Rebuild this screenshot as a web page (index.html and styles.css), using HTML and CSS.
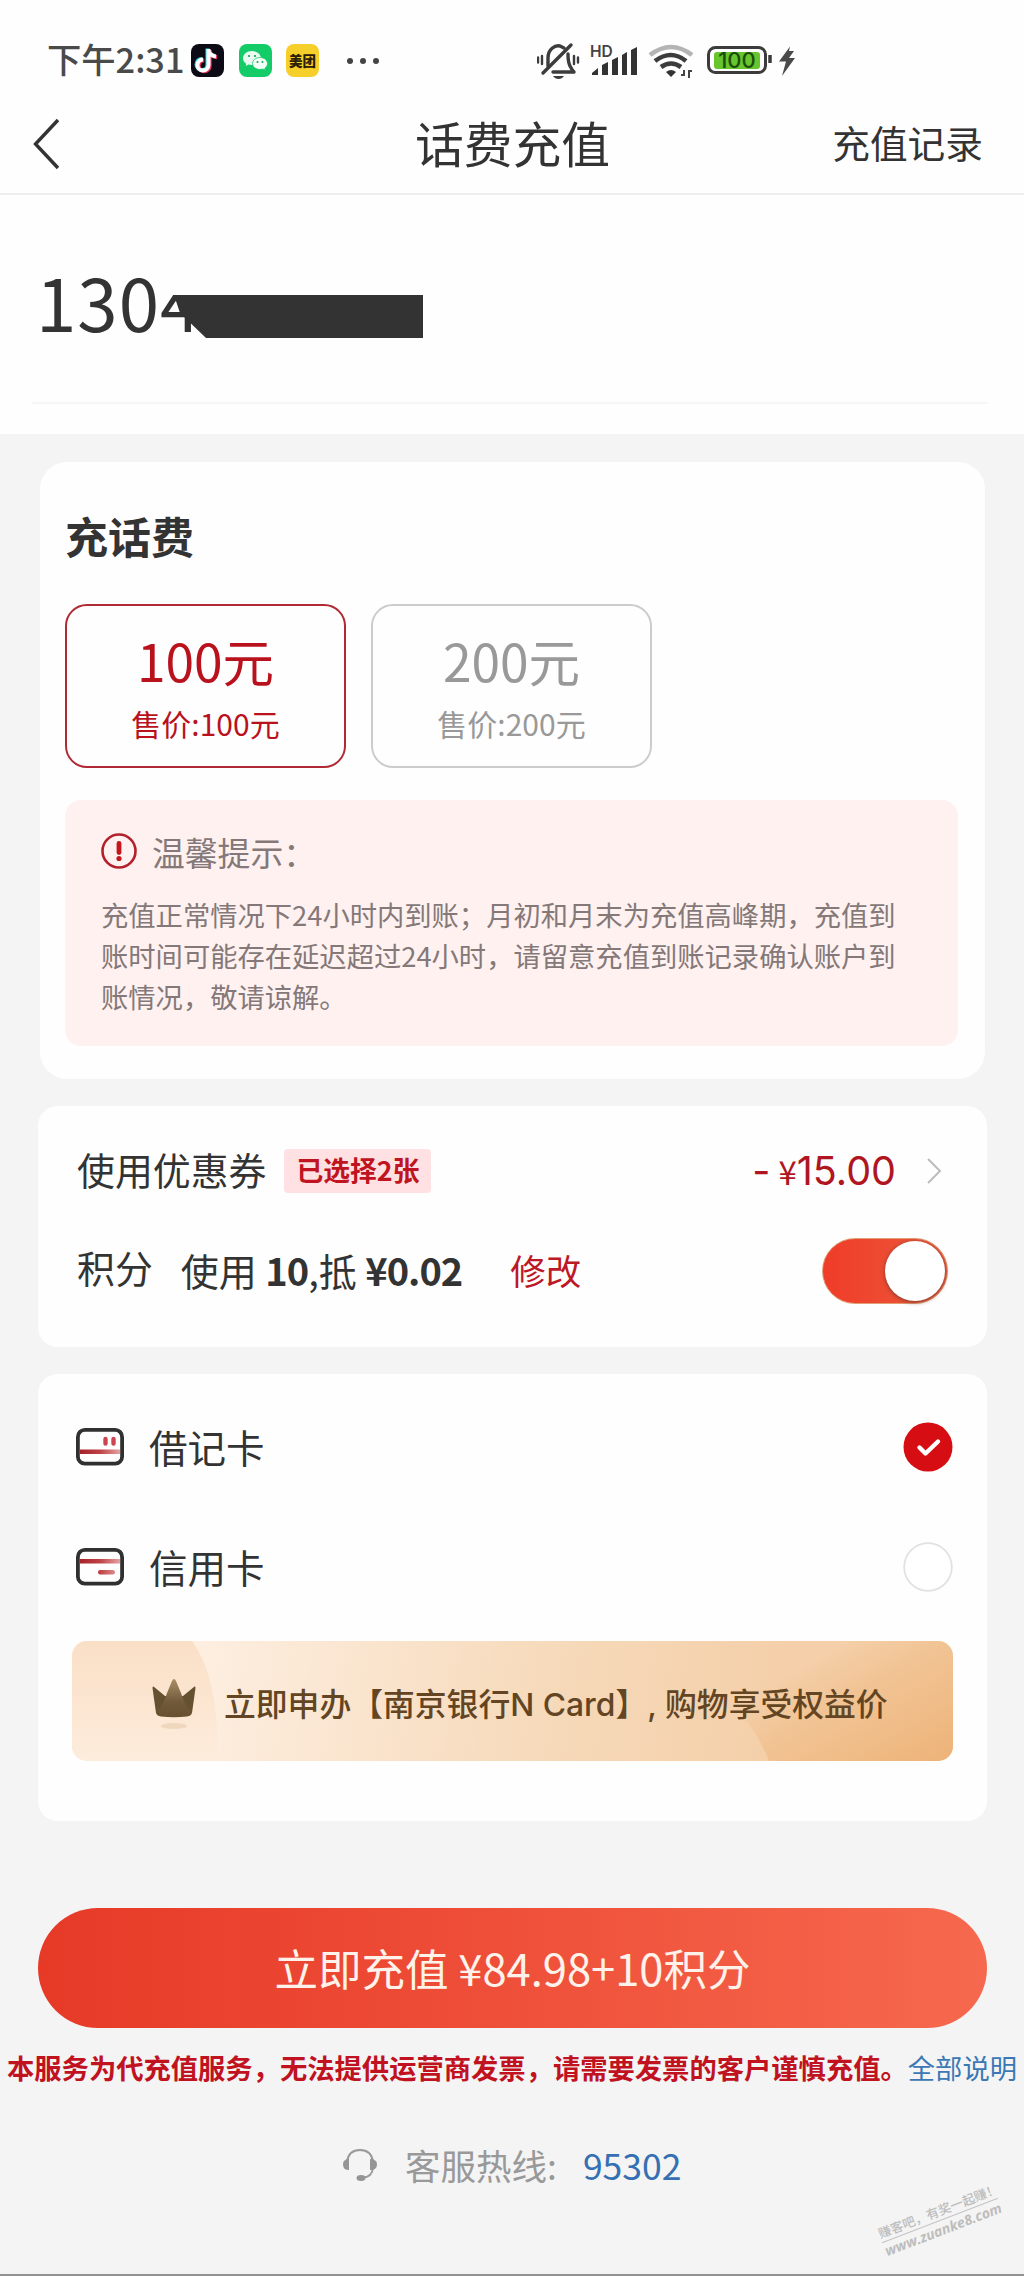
FILE: index.html
```html
<!DOCTYPE html>
<html lang="zh-CN">
<head>
<meta charset="utf-8">
<title>话费充值</title>
<link rel="stylesheet" href="styles.css">
</head>
<body>
<div class="screen">
  <header class="top">
    <div class="status">
      <span class="clock">下午2:31</span>
      <svg class="app" viewBox="0 0 33 33"><rect width="33" height="33" rx="8" fill="#0c0a14"/><g fill="none" stroke-width="4"><path d="M17.500 5v16a5.500 5.500 0 1 1-5.500-5.500M17.500 6c.7 4 3.500 6 7.500 6.500" stroke="#2fd8dd" transform="translate(-1 -.6)"/><path d="M17.500 5v16a5.500 5.500 0 1 1-5.500-5.500M17.500 6c.7 4 3.500 6 7.500 6.500" stroke="#e8325c" transform="translate(1.200 .8)"/><path d="M17.500 5v16a5.500 5.500 0 1 1-5.500-5.500M17.500 6c.7 4 3.500 6 7.500 6.500" stroke="#fff"/></g></svg>
      <svg class="app" viewBox="0 0 33 33"><rect width="33" height="33" rx="8" fill="#14cc67"/><path d="M13 7c-5 0-9 3.200-9 7.200 0 2.300 1.300 4.300 3.300 5.600L6.600 22l3-1.500c1 .3 2.200.5 3.400.5 5 0 9-3 9-6.800S18 7 13 7z" fill="#e9fbf1"/><path d="M21 13.500c-4.200 0-7.500 2.700-7.500 6s3.300 6 7.500 6c1 0 2-.2 2.900-.5l2.500 1.300-.6-2c1.700-1.100 2.700-2.900 2.700-4.800 0-3.300-3.300-6-7.500-6z" fill="#f4fff8" stroke="#14cc67" stroke-width=".8"/><g fill="#14a058"><circle cx="10" cy="12" r="1.100"/><circle cx="16" cy="12" r="1.100"/><circle cx="18.500" cy="18" r="1"/><circle cx="23.500" cy="18" r="1"/></g></svg>
      <span class="app meituan">美团</span>
      <svg class="dots" viewBox="0 0 34 8"><g fill="#444"><circle cx="4" cy="4" r="3"/><circle cx="17" cy="4" r="3"/><circle cx="30" cy="4" r="3"/></g></svg>
      <svg class="indicators" viewBox="0 0 262 38">
        <g fill="none" stroke="#3c3c3c" stroke-width="3.400" stroke-linecap="round" stroke-linejoin="round">
          <path d="M11 24V16C11 7 18 3 23 4L27 6"/><path d="M31 12Q31 20 33 24T37 30H16"/><path d="M6 31L34 3"/>
          <path d="M5 14v8M1 15.500v5M37 14v8M41 15.500v5" stroke-width="2.400"/>
        </g>
        <path d="M16 34h11q-2 3-5.500 3T16 34z" fill="#3c3c3c"/>
        <text x="53" y="15" class="hd">HD</text>
        <g fill="#333"><path d="M55 33v-2l6-5v7z"/><path d="M65 33V23l6-3v13z"/><path d="M75 33V18l6-3v18z"/><path d="M85 33V13l5-3v23z"/><path d="M94 33V8l6-3v28z"/></g>
        <g fill="none" stroke="#3c3c3c" stroke-width="4.600"><path d="M113 13Q134 -3 155 13" stroke="#b4b4b4"/><path d="M118 19Q134 7 149 19"/><path d="M124 25Q134 18 144 25"/></g>
        <path d="M129 30q5-4 10 0l-5 5z" fill="#333"/>
        <path d="M147 28v5h-3M147 34v-6M152 36v-7h3" fill="none" stroke="#444" stroke-width="2"/>
        <rect x="171.500" y="5.500" width="57" height="25" rx="7" fill="#fff" stroke="#3c3c3c" stroke-width="3"/>
        <rect x="177" y="10" width="46" height="17" rx="3" fill="#67c52e"/>
        <text x="200" y="26" class="charge">100</text>
        <path d="M233 13v8" stroke="#3c3c3c" stroke-width="3.500"/>
        <path d="M253 4.500L242 19.500h7L245 34l13-18h-6l5-7h-5z" fill="#4a4a4a"/>
      </svg>
    </div>
    <nav class="nav">
      <svg class="back" viewBox="0 0 30 54"><path d="M26 3L3.500 27 26 51" fill="none" stroke="#333" stroke-width="3.400"/></svg>
      <h1>话费充值</h1>
      <a class="record">充值记录</a>
    </nav>
  </header>

  <section class="phone">
    <div class="number">1304
      <svg class="redact" viewBox="0 0 270 70"><path d="M0 0h50v22H0z" fill="#fefefe"/><path d="M14 22h249v43H46L20 40z" fill="#333"/></svg>
    </div>
  </section>

  <main class="content">
    <section class="card recharge">
      <h2>充话费</h2>
      <div class="plans">
        <div class="plan active"><b>100元</b><span>售价:100元</span></div>
        <div class="plan"><b>200元</b><span>售价:200元</span></div>
      </div>
      <div class="tips">
        <div class="tips-title">
          <svg class="warn" viewBox="0 0 36 36"><circle cx="18" cy="18" r="16.500" fill="none" stroke="#b3202c" stroke-width="2.600"/><path d="M18 10.500v9" stroke="#c3161f" stroke-width="4.800" stroke-linecap="round"/><circle cx="18" cy="25.500" r="2.600" fill="#c3161f"/></svg>
          <span>温馨提示：</span>
        </div>
        <p>充值正常情况下24小时内到账；月初和月末为充值高峰期，充值到<br>账时间可能存在延迟超过24小时，请留意充值到账记录确认账户到<br>账情况，敬请谅解。</p>
      </div>
    </section>

    <section class="card discount">
      <div class="row">
        <span class="label">使用优惠券</span><span class="badge">已选择2张</span>
        <span class="amount">- <small>¥</small>15.00</span>
        <svg class="chev" viewBox="0 0 16 28"><path d="M2 2l12 12L2 26" fill="none" stroke="#bcbcbc" stroke-width="2"/></svg>
      </div>
      <div class="row">
        <span class="label">积分</span>
        <span class="points">使用 <b>10</b>,抵 <b>¥0.02</b></span>
        <a class="edit">修改</a>
        <span class="toggle"><i></i></span>
      </div>
    </section>

    <section class="card pay">
      <div class="method">
        <svg class="bank" viewBox="0 0 48 38"><defs><linearGradient id="red" gradientUnits="userSpaceOnUse" x1="4" x2="44"><stop offset="0" stop-color="#a8222a"/><stop offset=".5" stop-color="#bd4246"/><stop offset="1" stop-color="#e6a3a1"/></linearGradient></defs><rect x="4" y="21.500" width="40" height="4.500" fill="url(#red)"/><rect x="1.900" y="1.900" width="44.200" height="33.800" rx="7" fill="none" stroke="#303030" stroke-width="3.800"/><path d="M29.500 11v4.500M37.500 11v4.500" stroke="#cc4550" stroke-width="4.400" stroke-linecap="round"/></svg>
        <span>借记卡</span>
        <svg class="radio" viewBox="0 0 50 50"><circle cx="25" cy="25" r="24.500" fill="#d70d14"/><path d="M16.500 25.500l6 6L35 19.500" fill="none" stroke="#fff" stroke-width="4.400" stroke-linecap="round" stroke-linejoin="round"/></svg>
      </div>
      <div class="method">
        <svg class="bank" viewBox="0 0 48 38"><rect x="4" y="11" width="40" height="4.500" fill="url(#red)"/><rect x="1.900" y="1.900" width="44.200" height="33.800" rx="7" fill="none" stroke="#303030" stroke-width="3.800"/><rect x="22" y="22" width="17" height="4.500" rx="2.200" fill="url(#red)"/></svg>
        <span>信用卡</span>
        <svg class="radio" viewBox="0 0 50 50"><circle cx="25" cy="25" r="23.800" fill="#fff" stroke="#e2e2e2" stroke-width="1.800"/></svg>
      </div>
      <div class="banner">
        <svg class="swoosh" viewBox="0 0 881 120"><defs><linearGradient id="arcL" x2="0" y2="1"><stop offset="0" stop-color="#fadfc6"/><stop offset="1" stop-color="#fdecdc"/></linearGradient><linearGradient id="arcR" x2="1" y2="1"><stop offset=".25" stop-color="#efb981" stop-opacity="0"/><stop offset=".5" stop-color="#efb981" stop-opacity=".55"/><stop offset="1" stop-color="#edb277"/></linearGradient></defs><path d="M0 0h120q28 38 25 120H0z" fill="url(#arcL)"/><path d="M881 0H740L668 72q18 20 29 48h184z" fill="url(#arcR)"/></svg>
        <svg class="crown" viewBox="0 0 44 54"><defs><linearGradient id="cr" x2="0" y2="1"><stop offset="0" stop-color="#a98d66"/><stop offset=".6" stop-color="#715a3a"/><stop offset="1" stop-color="#66502f"/></linearGradient></defs><ellipse cx="22" cy="48" rx="13" ry="3" fill="#ead0b3" opacity=".7"/><path d="M1.500 8.500Q.5 8 .5 10L4 35H40L43.500 10Q43.500 8 42.500 8.500L31 18H13z" fill="#65502f"/><path d="M4 35Q12 26 15 15L20 3Q22-1 24 3l5 12q3 11 11 20-1 3-5 3.500-13 1.500-26 0-4-.5-5-3.500z" fill="url(#cr)"/></svg>
        <span>立即申办【南京银行<em>N Card</em>】<em>, </em>购物享受权益价</span>
      </div>
    </section>
  </main>

  <button class="submit">立即充值 ¥84.98+10积分</button>
  <p class="notice"><b>本服务为代充值服务，无法提供运营商发票，请需要发票的客户谨慎充值。</b><a>全部说明</a></p>
  <footer class="hotline">
    <svg class="headset" viewBox="0 0 36 34"><path d="M5 14C6 6 11 2 18 2s12 4 13 12v6q-1 9-10 9.500" fill="none" stroke="#999" stroke-width="2"/><path d="M7 11v11Q1 22 1 16.500T7 11zM28 11v11q7 0 7-5.500T28 11z" fill="#959595"/><ellipse cx="19" cy="30" rx="4.500" ry="3" fill="#959595"/></svg>
    <span>客服热线:</span><a>95302</a>
  </footer>
  <div class="watermark"><span>赚客吧，有奖一起赚！</span><span class="site">www.zuanke8.com</span></div>
</div>
</body>
</html>
```
FILE: styles.css
```css
* { box-sizing: border-box; }
body { margin: 0; background: #f4f4f4; color: #333; font-family: "Noto Sans CJK SC", sans-serif; }
h1, h2, p { margin: 0; font-weight: 400; }
em, i { font-style: normal; }
svg { display: block; flex: none; }
.screen { position: relative; width: 1024px; height: 2276px; overflow: hidden; background: #f4f4f4; border-bottom: 2px solid #929292; }

.top { height: 195px; background: #fefefe; border-bottom: 2px solid #eee; }
.status { display: flex; align-items: center; height: 94px; padding: 27px 0 0 47px; }
.clock { width: 144px; font-size: 34.300px; line-height: 40px; white-space: nowrap; font-weight: 500; color: #4a4a4a; margin-top: -5px; }
.app { width: 33px; height: 33px; margin-right: 14.500px; }
.meituan { border-radius: 8px; background: #f6cf2b; color: #2b2006; font-size: 13.500px; font-weight: 900; line-height: 32px; text-align: center; margin-right: 27px; }
.dots { width: 34px; height: 8px; margin-right: 157px; }
.indicators { width: 262px; height: 38px; }
.hd { font: 600 15.500px Inter, sans-serif; fill: #444; }
.charge { font: 500 22px Inter, sans-serif; fill: #1d4d0c; text-anchor: middle; }
.nav { display: grid; grid-template-columns: 1fr auto 1fr; align-items: center; height: 99px; padding: 0 41px 0 32px; }
.back { width: 30px; height: 54px; }
.nav h1 { font-size: 48.800px; line-height: 56px; margin: -3px -5px 0 5px; }
.record { justify-self: end; font-size: 37.700px; line-height: 50px; margin-top: -3px; }

.phone { height: 239px; padding: 0 36px 0 32px; background: #fefefe; }
.number { position: relative; height: 209px; padding: 61px 0 0 4px; border-bottom: 2px solid #f6f6f6; font-size: 72.700px; line-height: 90px; letter-spacing: 1px; }
.redact { position: absolute; left: 128px; top: 78px; width: 270px; height: 70px; }

.content { display: grid; gap: 27px; padding: 28px 37px 0 38px; }
.card { background: #fefefe; border-radius: 20px; }
.recharge { height: 617px; margin: 0 2px 0 2px; padding: 43px 27px 0 25px; border-radius: 27px; }
.recharge h2 { font-size: 43px; line-height: 60px; font-weight: 700; }
.plans { display: flex; gap: 25px; margin-top: 39px; }
.plan { display: flex; flex-direction: column; align-items: center; width: 281px; height: 164px; padding-top: 22px; border: 2px solid #ccc; border-radius: 22px; color: #999; }
.plan b { font-size: 51.500px; line-height: 64px; font-weight: 400; }
.plan span { font-size: 30px; line-height: 44px; margin-top: 9px; }
.plan.active { border-color: #b02a35; color: #b9121d; }
.tips { height: 246px; margin-top: 32px; padding: 30px 36px 0; background: #fef1f0; border-radius: 16px; color: #847878; }
.tips-title { display: flex; align-items: center; gap: 15px; height: 44px; font-size: 32.800px; line-height: 44px; }
.warn { width: 36px; height: 36px; margin-top: -3px; }
.tips p { margin-top: 20px; font-size: 27.300px; line-height: 40.800px; white-space: nowrap; }

.discount { height: 241px; padding: 15px 38px 0 39px; }
.row { display: flex; align-items: center; height: 100px; }
.label { font-size: 37.900px; line-height: 50px; margin-top: -5px; }
.row + .row .label { margin-top: -9px; }
.badge { height: 44px; margin-left: 18px; padding: 0 12px; border-radius: 4px; background: #ffe1e3; color: #c01521; font-size: 26.800px; font-weight: 700; line-height: 41px; }
.amount { margin-left: auto; margin-right: 30px; color: #b01522; font: 400 39.500px/50px Inter, "Noto Sans CJK SC", sans-serif; word-spacing: -3px; }
.amount small { font: 33px "Noto Sans CJK SC", sans-serif; line-height: 1; }
.chev { width: 16px; height: 28px; margin-right: 7px; }
.points { margin-left: 28px; font-size: 38px; line-height: 50px; margin-top: -3px; }
.points b { font-weight: 700; letter-spacing: -1px; }
.edit { margin-left: 48px; margin-top: -3px; color: #bd1825; font-size: 35.500px; }
.toggle { width: 126px; height: 66px; margin-left: auto; margin-right: 1px; padding: 2px; border: 1.500px solid #e0a075; border-radius: 33px; background: linear-gradient(90deg, #ef3c29, #ed5a3c); }
.toggle i { display: block; width: 60px; height: 60px; margin: 0 0 0 60px; border-radius: 50%; background: #fff; box-shadow: 0 1px 4px #7a3b2d; }

.pay { height: 447px; padding: 13px 34px 0; }
.method { display: flex; align-items: center; height: 120px; padding-left: 4px; font-size: 38.500px; }
.bank { width: 48px; height: 38px; }
.method span { margin: -2px auto 0 25px; line-height: 50px; }
.radio { width: 50px; height: 50px; }
.banner { position: relative; display: flex; align-items: center; height: 120px; margin-top: 14px; padding-left: 80px; overflow: hidden; border-radius: 15px; background: linear-gradient(100deg, #fdeee0 15%, #f6d9b9 55%, #f4cfa9 80%); color: #634523; font-size: 31.800px; font-weight: 500; white-space: nowrap; }
.swoosh { position: absolute; inset: 0; width: 881px; height: 120px; }
.crown { position: relative; width: 44px; height: 54px; margin-top: 8px; }
.banner span { position: relative; margin-left: 28px; line-height: 44px; margin-top: 4px; }
.banner em { font-family: Inter, sans-serif; }

.submit { display: block; width: 949px; height: 120px; margin: 87px 0 0 38px; padding: 0 0 2px; border: 0; border-radius: 60px; background: linear-gradient(90deg, #e63a27, #ee4d37 45%, #f6694e); color: #fff2ea; font-family: inherit; font-size: 43.500px; }
.notice { margin: 19px 0 0 7px; color: #c0121f; font-size: 27.300px; line-height: 40px; white-space: nowrap; }
.notice a { color: #3b78b5; }
.hotline { display: flex; align-items: center; height: 50px; margin: 53px 0 0 342px; color: #999; font-size: 35.500px; }
.headset { width: 36px; height: 34px; }
.hotline span { margin-left: 27px; line-height: 50px; margin-top: -1px; }
.hotline a { margin-left: 26px; color: #3570b2; line-height: 50px; margin-top: -1px; }
.watermark { position: absolute; left: 878px; top: 2202px; display: flex; flex-direction: column; width: 124px; color: #bdbdbd; font-size: 12.800px; font-weight: 500; line-height: 18px; white-space: nowrap; transform: rotate(-21deg); }
.site { border-top: 1px solid #c4c4c4; font: italic 700 14px/18px "Open Sans", sans-serif; }
```
